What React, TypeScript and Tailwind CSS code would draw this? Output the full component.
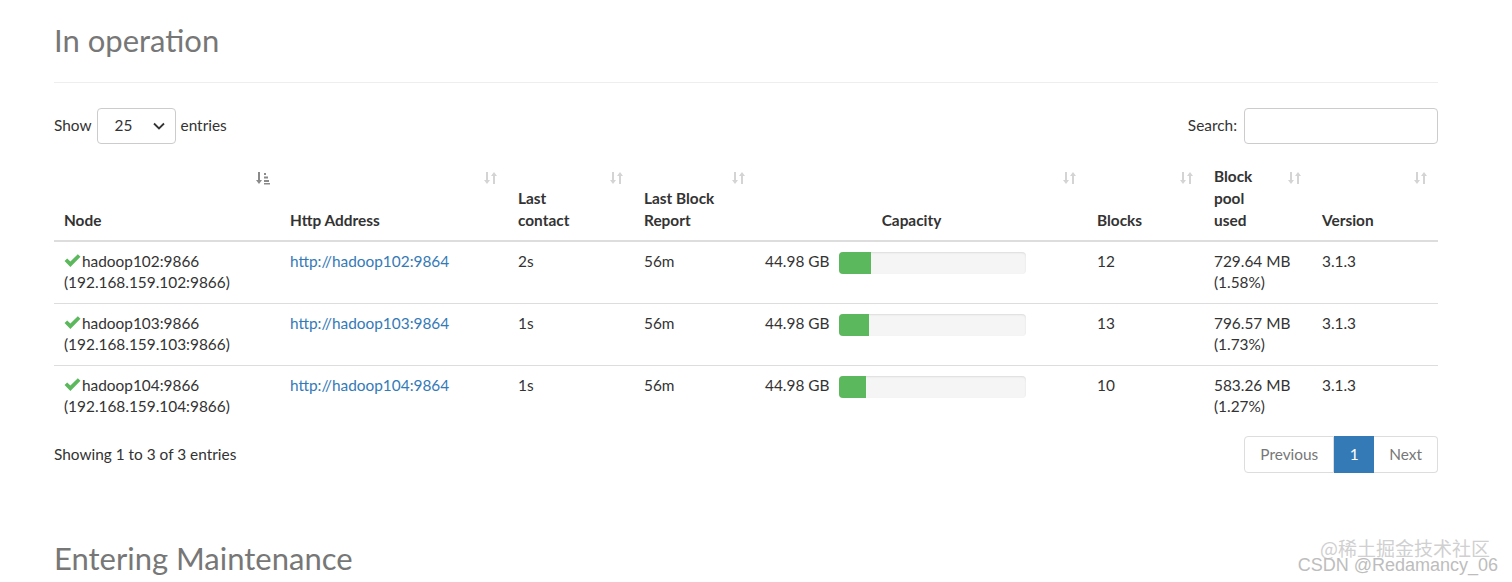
import React from 'react'

const rows = [
  { host: 'hadoop102:9866', ip: '(192.168.159.102:9866)', http: 'http://hadoop102:9864', contact: '2s', blocks: '12', used: '729.64 MB', pct: '(1.58%)', bar: 32 },
  { host: 'hadoop103:9866', ip: '(192.168.159.103:9866)', http: 'http://hadoop103:9864', contact: '1s', blocks: '13', used: '796.57 MB', pct: '(1.73%)', bar: 30 },
  { host: 'hadoop104:9866', ip: '(192.168.159.104:9866)', http: 'http://hadoop104:9864', contact: '1s', blocks: '10', used: '583.26 MB', pct: '(1.27%)', bar: 27 },
]

const SortIcon = () => (
  <svg width="14" height="16" viewBox="0 0 14 16" className="absolute top-[14px] right-[10px]">
    <g fill="#d4d4d4">
      <rect x="2" y="2" width="2" height="9" />
      <path d="M0 10h6l-3 4z" />
      <rect x="9" y="5" width="2" height="9" />
      <path d="M7 6h6l-3-4z" />
    </g>
  </svg>
)

const SortAscIcon = () => (
  <svg width="14" height="16" viewBox="0 0 14 16" className="absolute top-[14px] right-[10px]">
    <g fill="#8a8a8a">
      <rect x="2" y="2" width="2" height="9" />
      <path d="M0 10h6l-3 4z" />
      <rect x="8" y="3" width="2" height="2" />
      <rect x="8" y="6.5" width="4" height="2" />
      <rect x="8" y="10" width="5" height="2" />
      <rect x="8" y="13" width="6" height="1.5" />
    </g>
  </svg>
)

const Check = () => (
  <svg width="17" height="15" viewBox="0 0 16 14" className="inline-block align-[-1px] mr-[1px]">
    <path d="M0.5 7.5 L3 5 L6 8 L13 1 L15.5 3.5 L6 13 Z" fill="#5cb85c" />
  </svg>
)

const Th = ({ children, asc, center, w }: { children: React.ReactNode; asc?: boolean; center?: boolean; w: string }) => (
  <th className={`relative align-bottom pl-[10px] pr-[30px] pt-[9px] pb-[9px] font-bold text-[#333] leading-[22px] border-b-2 border-[#ddd] ${center ? 'text-center' : 'text-left'} ${w}`}>
    {children}
    {asc ? <SortAscIcon /> : <SortIcon />}
  </th>
)

const td = 'align-top px-[10px] pt-[9px] pb-[10px] leading-[21px]'

export default function App() {
  return (
    <div className="relative min-h-[582px] bg-white overflow-hidden" style={{ fontFamily: 'Lato, "Noto Sans", sans-serif' }}>
      <div className="ml-[54px] w-[1384px] text-[15.4px] text-[#333]">
        <div className="pt-[21px] pb-[23px] border-b border-[#eee]">
          <h1 className="text-[31px] leading-[38px] text-[#777]">In operation</h1>
        </div>

        <div className="mt-[25px] flex items-center justify-between">
          <label className="flex items-center">
            Show
            <span className="mx-[5px] w-[79px] h-[36px] border border-[#ccc] rounded-[4px] flex items-center justify-between pl-[17px] pr-[10px]">
              <span>25</span>
              <svg width="12" height="8" viewBox="0 0 12 8"><path d="M1 1.5 6 6.5 11 1.5" fill="none" stroke="#333" strokeWidth="1.8" /></svg>
            </span>
            entries
          </label>
          <label className="flex items-center">
            Search:
            <span className="ml-[7px] w-[194px] h-[36px] border border-[#ccc] rounded-[4px]" />
          </label>
        </div>

        <table className="mt-[12px] w-full table-fixed border-collapse">
          <thead>
            <tr>
              <Th asc w="w-[226px]">Node</Th>
              <Th w="w-[228px]">Http Address</Th>
              <Th w="w-[126px]">Last<br />contact</Th>
              <Th w="w-[122px]">Last Block<br />Report</Th>
              <Th center w="w-[331px]">Capacity</Th>
              <Th w="w-[117px]">Blocks</Th>
              <Th w="w-[108px]">Block<br />pool<br />used</Th>
              <Th w="w-[126px]">Version</Th>
            </tr>
          </thead>
          <tbody>
            {rows.map((r, i) => (
              <tr key={r.host} className={i < rows.length - 1 ? 'border-b border-[#ddd]' : ''}>
                <td className={td}>
                  <Check />{r.host}<br />{r.ip}
                </td>
                <td className={td}>
                  <a className="text-[#337ab7]">{r.http}</a>
                </td>
                <td className={td}>{r.contact}</td>
                <td className={td}>56m</td>
                <td className="align-top px-[9px] pt-[9px] pb-[10px] leading-[21px]">
                  <div className="flex items-start">
                    <span className="w-[74px]">44.98 GB</span>
                    <div className="mt-[1px] w-[187px] h-[22px] rounded-[4px] bg-[#f5f5f5] shadow-[inset_0_1px_2px_rgba(0,0,0,0.1)] overflow-hidden">
                      <div className="h-full bg-[#5cb85c]" style={{ width: r.bar }} />
                    </div>
                  </div>
                </td>
                <td className={td}>{r.blocks}</td>
                <td className={td}>{r.used}<br />{r.pct}</td>
                <td className={td}>3.1.3</td>
              </tr>
            ))}
          </tbody>
        </table>

        <div className="mt-[9px] flex items-start justify-between">
          <div className="pt-[7px]">Showing 1 to 3 of 3 entries</div>
          <div className="flex h-[37px]">
            <span className="px-[15px] flex items-center border border-[#ddd] rounded-l-[4px] text-[#777]">Previous</span>
            <span className="w-[40px] flex items-center justify-center bg-[#337ab7] border border-[#337ab7] text-white">1</span>
            <span className="px-[15px] flex items-center border border-[#ddd] border-l-0 rounded-r-[4px] text-[#777]">Next</span>
          </div>
        </div>

        <div className="mt-[66px]">
          <h1 className="text-[31px] leading-[38px] text-[#777]">Entering Maintenance</h1>
        </div>
      </div>

      <div className="absolute right-[22px] top-[538px] text-[19px] text-[#d0d0d0] leading-none" style={{ fontFamily: '"Noto Sans CJK SC", sans-serif' }}>@稀土掘金技术社区</div>
      <div className="absolute right-[14px] top-[556px] text-[18px] text-[#bdbdbd] leading-none" style={{ fontFamily: '"Liberation Sans", sans-serif' }}>CSDN @Redamancy_06</div>
    </div>
  )
}
